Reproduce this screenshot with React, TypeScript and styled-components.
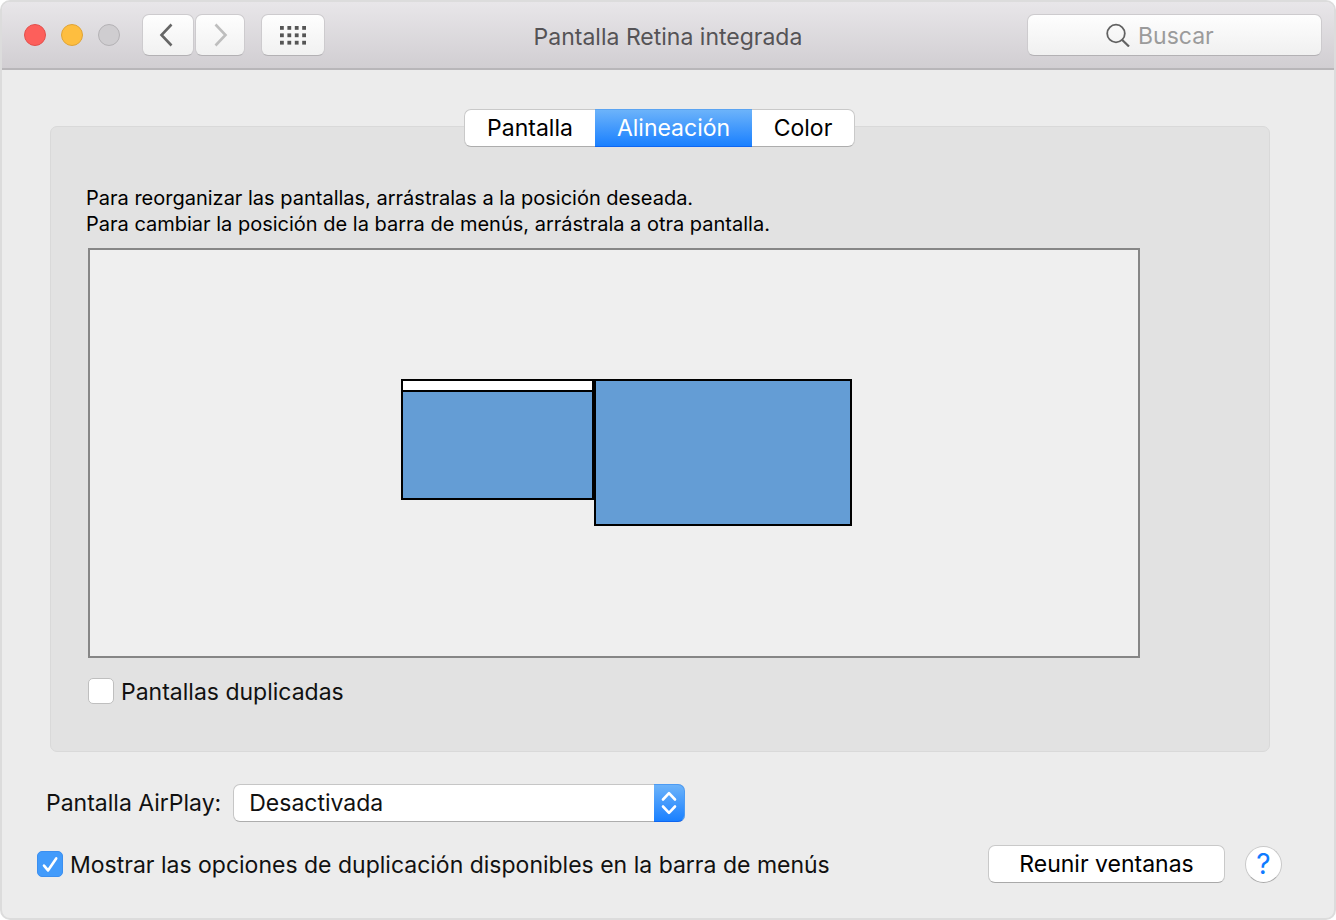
import React from "react";
import styled, { createGlobalStyle } from "styled-components";

const GlobalStyle = createGlobalStyle`
  *, *::before, *::after { box-sizing: border-box; }
  body {
    margin: 0;
    background: #fff;
    font-family: Inter, "Liberation Sans", sans-serif;
    font-size: 23px;
    line-height: 28px;
    color: #111;
  }
  button, input, select { font: inherit; color: inherit; margin: 0; }
`;

const Window = styled.div`
  min-height: 100vh;
  display: flex;
  flex-direction: column;
  border: 2px solid #dcdcdc;
  border-radius: 10px;
  background: #ececec;
  overflow: hidden;
`;

const TitleBar = styled.header`
  display: grid;
  grid-template-columns: 1fr auto 1fr;
  align-items: center;
  height: 68px;
  padding: 0 12px;
  border-bottom: 2px solid #b8b6b9;
  background: linear-gradient(#e8e6e9, #d1ced2);
`;

const Controls = styled.div`
  display: flex;
  align-items: center;
  padding-left: 10px;
`;

const Lights = styled.div`
  display: flex;
  gap: 15px;
  margin-right: 22px;
`;

const Light = styled.button<{ $fill: string; $edge: string }>`
  width: 22px;
  height: 22px;
  padding: 0;
  border: 1px solid ${(p) => p.$edge};
  border-radius: 50%;
  background: ${(p) => p.$fill};
`;

const ToolButton = styled.button<{ $width: number; $gap?: number }>`
  display: flex;
  align-items: center;
  justify-content: center;
  width: ${(p) => p.$width}px;
  height: 42px;
  margin-right: ${(p) => p.$gap ?? 0}px;
  padding: 0;
  border: 1px solid #cdcbce;
  border-bottom-color: #b3b1b4;
  border-radius: 7px;
  background: linear-gradient(#fefefe, #f1f1f1);
`;

const Title = styled.h1`
  margin: 0;
  padding-top: 4px;
  font-size: 23px;
  font-weight: 400;
  color: #555356;
`;

const Search = styled.label`
  justify-self: end;
  display: flex;
  align-items: center;
  gap: 8px;
  width: 295px;
  height: 42px;
  padding-left: 78px;
  border: 1px solid #cdcbce;
  border-bottom-color: #b3b1b4;
  border-radius: 7px;
  background: linear-gradient(#fefefe, #f0f0f0);
`;

const SearchInput = styled.input`
  flex: 1;
  min-width: 0;
  padding: 2px 0 0;
  border: 0;
  outline: 0;
  background: none;
  &::placeholder { color: #9b9b9b; opacity: 1; }
`;

const Content = styled.main`
  flex: 1;
  padding: 56px 52px 34px 35px;
`;

const Panel = styled.section`
  margin: 0 12px 32px 13px;
  padding: 0 129px 45px 37px;
  border: 1px solid #d9d9d9;
  border-radius: 7px;
  background: #e2e2e2;
`;

const TabRow = styled.div`
  display: flex;
  justify-content: center;
  height: 38px;
  margin: -18px -129px 38px -38px;
`;

const Tab = styled.button<{ $width: number; $active?: boolean }>`
  width: ${(p) => p.$width}px;
  padding: 0;
  border: 1px solid #c9c9c9;
  border-bottom-color: #adadad;
  background: #fff;
  color: #000;
  &:first-child { border-right: 0; border-radius: 7px 0 0 7px; }
  &:last-child { border-left: 0; border-radius: 0 7px 7px 0; }
  ${(p) =>
    p.$active &&
    `
    border: 0;
    border-top: 1px solid #5ba4f2;
    border-bottom: 1px solid #0f66f0;
    background: linear-gradient(#6cb3fa, #1a80ff);
    color: #fff;
  `}
`;

const Hint = styled.p`
  margin: 0 0 11px -2px;
  font-size: 20px;
  line-height: 26px;
  color: #000;
`;

const Arrangement = styled.div`
  position: relative;
  height: 410px;
  border: 2px solid #868686;
  background: #efefef;
`;

const Display = styled.div<{ $x: number; $width: number; $height: number }>`
  position: absolute;
  top: 129px;
  left: calc(50% + ${(p) => p.$x}px);
  width: ${(p) => p.$width}px;
  height: ${(p) => p.$height}px;
  border: 2px solid #000;
  background: #649dd5;
`;

const MenuStrip = styled.div`
  height: 11px;
  border-bottom: 2px solid #000;
  background: #fff;
`;

const CheckLabel = styled.label`
  display: flex;
  align-items: center;
  gap: 7px;
  width: max-content;
`;

const CheckText = styled.span`
  padding-top: 2px;
`;

const DuplicateRow = styled.div`
  margin-top: 18px;
`;

const CheckBox = styled.span`
  display: grid;
  width: 26px;
  height: 26px;
  > * { grid-area: 1 / 1; }
  svg { pointer-events: none; visibility: hidden; }
  input:checked + svg { visibility: visible; }
`;

const CheckInput = styled.input`
  appearance: none;
  width: 26px;
  height: 26px;
  border: 1px solid #bfbfbf;
  border-radius: 5px;
  background: #fff;
  &:checked { border-color: #3b8ff0; background: #429bfb; }
`;

const AirPlayRow = styled.div`
  display: flex;
  align-items: center;
  gap: 12px;
  padding-left: 9px;
`;

const SelectBox = styled.div`
  display: grid;
  width: 452px;
  height: 38px;
  > * { grid-area: 1 / 1; }
`;

const Select = styled.select`
  appearance: none;
  width: 100%;
  padding: 0 40px 0 15px;
  border: 1px solid #c6c6c6;
  border-bottom-color: #adadad;
  border-radius: 7px;
  background: #fff;
`;

const Stepper = styled.span`
  justify-self: end;
  display: flex;
  align-items: center;
  justify-content: center;
  width: 31px;
  border: 1px solid #4c9bf3;
  border-bottom-color: #0f66f0;
  border-left: 0;
  border-radius: 0 7px 7px 0;
  background: linear-gradient(#6cb3fa, #1a80ff);
  pointer-events: none;
`;

const Footer = styled.footer`
  display: flex;
  align-items: center;
  justify-content: space-between;
  margin-top: 23px;
`;

const Actions = styled.div`
  display: flex;
  align-items: center;
  gap: 20px;
`;

const PushButton = styled.button`
  width: 237px;
  height: 38px;
  padding: 0;
  border: 1px solid #c9c9c9;
  border-bottom-color: #a9a9a9;
  border-radius: 7px;
  background: #fff;
  color: #000;
`;

const HelpButton = styled.button`
  display: flex;
  align-items: center;
  justify-content: center;
  width: 37px;
  height: 37px;
  padding: 0;
  border: 1px solid #c9c9c9;
  border-bottom-color: #a9a9a9;
  border-radius: 50%;
  background: #fff;
  color: #0f7bff;
  font-size: 28px;
`;

const Chevron = ({ d, color }: { d: string; color: string }) => (
  <svg width="18" height="24" viewBox="0 0 18 24" fill="none" stroke={color} strokeWidth="2.6">
    <path d={d} />
  </svg>
);

const GridIcon = () => (
  <svg width="26" height="19" viewBox="0 0 26 19" fill="#555">
    {[0, 7.4, 14.8].map((y) =>
      [0, 7.4, 14.8, 22.2].map((x) => <rect key={`${x}-${y}`} x={x} y={y} width="3.8" height="3.8" />)
    )}
  </svg>
);

const SearchIcon = () => (
  <svg width="24" height="24" viewBox="0 0 24 24" fill="none" stroke="#626262" strokeWidth="1.8">
    <circle cx="10" cy="10.5" r="8.8" />
    <path d="M16 16.7 23 23.5" strokeWidth="2.2" />
  </svg>
);

const Check = ({ id, label, checked }: { id: string; label: string; checked?: boolean }) => (
  <CheckLabel htmlFor={id}>
    <CheckBox>
      <CheckInput id={id} type="checkbox" defaultChecked={checked} />
      <svg width="26" height="26" viewBox="0 0 26 26" fill="none" stroke="#fff" strokeWidth="2.6" strokeLinecap="round" strokeLinejoin="round">
        <path d="M7 14.6 11 19.4 19.2 7.4" />
      </svg>
    </CheckBox>
    <CheckText>{label}</CheckText>
  </CheckLabel>
);

export default function App() {
  return (
    <>
      <GlobalStyle />
      <Window>
        <TitleBar>
          <Controls>
            <Lights>
              <Light $fill="#fd5f5b" $edge="#e2504c" aria-label="Cerrar" />
              <Light $fill="#febe3f" $edge="#e0a436" aria-label="Minimizar" />
              <Light $fill="#cfcdd0" $edge="#b4b2b5" aria-label="Ampliar" />
            </Lights>
            <ToolButton $width={52} $gap={1} aria-label="Atrás">
              <Chevron d="M12.5 1.5 2.5 12 12.5 22.5" color="#666" />
            </ToolButton>
            <ToolButton $width={50} $gap={16} aria-label="Adelante">
              <Chevron d="M4.5 1.5 14.5 12 4.5 22.5" color="#bebebe" />
            </ToolButton>
            <ToolButton $width={64} aria-label="Mostrar todo">
              <GridIcon />
            </ToolButton>
          </Controls>
          <Title>Pantalla Retina integrada</Title>
          <Search>
            <SearchIcon />
            <SearchInput type="text" placeholder="Buscar" aria-label="Buscar" />
          </Search>
        </TitleBar>

        <Content>
          <Panel>
            <TabRow role="tablist">
              <Tab role="tab" $width={131}>Pantalla</Tab>
              <Tab role="tab" $width={157} $active aria-selected>Alineación</Tab>
              <Tab role="tab" $width={103}>Color</Tab>
            </TabRow>
            <Hint>
              Para reorganizar las pantallas, arrástralas a la posición deseada.
              <br />
              Para cambiar la posición de la barra de menús, arrástrala a otra pantalla.
            </Hint>
            <Arrangement>
              <Display $x={-213} $width={193} $height={121}>
                <MenuStrip />
              </Display>
              <Display $x={-20} $width={258} $height={147} />
            </Arrangement>
            <DuplicateRow>
              <Check id="mirror" label="Pantallas duplicadas" />
            </DuplicateRow>
          </Panel>

          <AirPlayRow>
            <label htmlFor="airplay">Pantalla AirPlay:</label>
            <SelectBox>
              <Select id="airplay" defaultValue="off">
                <option value="off">Desactivada</option>
              </Select>
              <Stepper>
                <svg width="16" height="24" viewBox="0 0 16 24" fill="none" stroke="#fff" strokeWidth="2.6" strokeLinecap="round" strokeLinejoin="round">
                  <path d="M2 8.5 8 2.2 14 8.5M2 15.5 8 21.8 14 15.5" />
                </svg>
              </Stepper>
            </SelectBox>
          </AirPlayRow>

          <Footer>
            <Check id="menubar" checked label="Mostrar las opciones de duplicación disponibles en la barra de menús" />
            <Actions>
              <PushButton>Reunir ventanas</PushButton>
              <HelpButton aria-label="Ayuda">?</HelpButton>
            </Actions>
          </Footer>
        </Content>
      </Window>
    </>
  );
}
